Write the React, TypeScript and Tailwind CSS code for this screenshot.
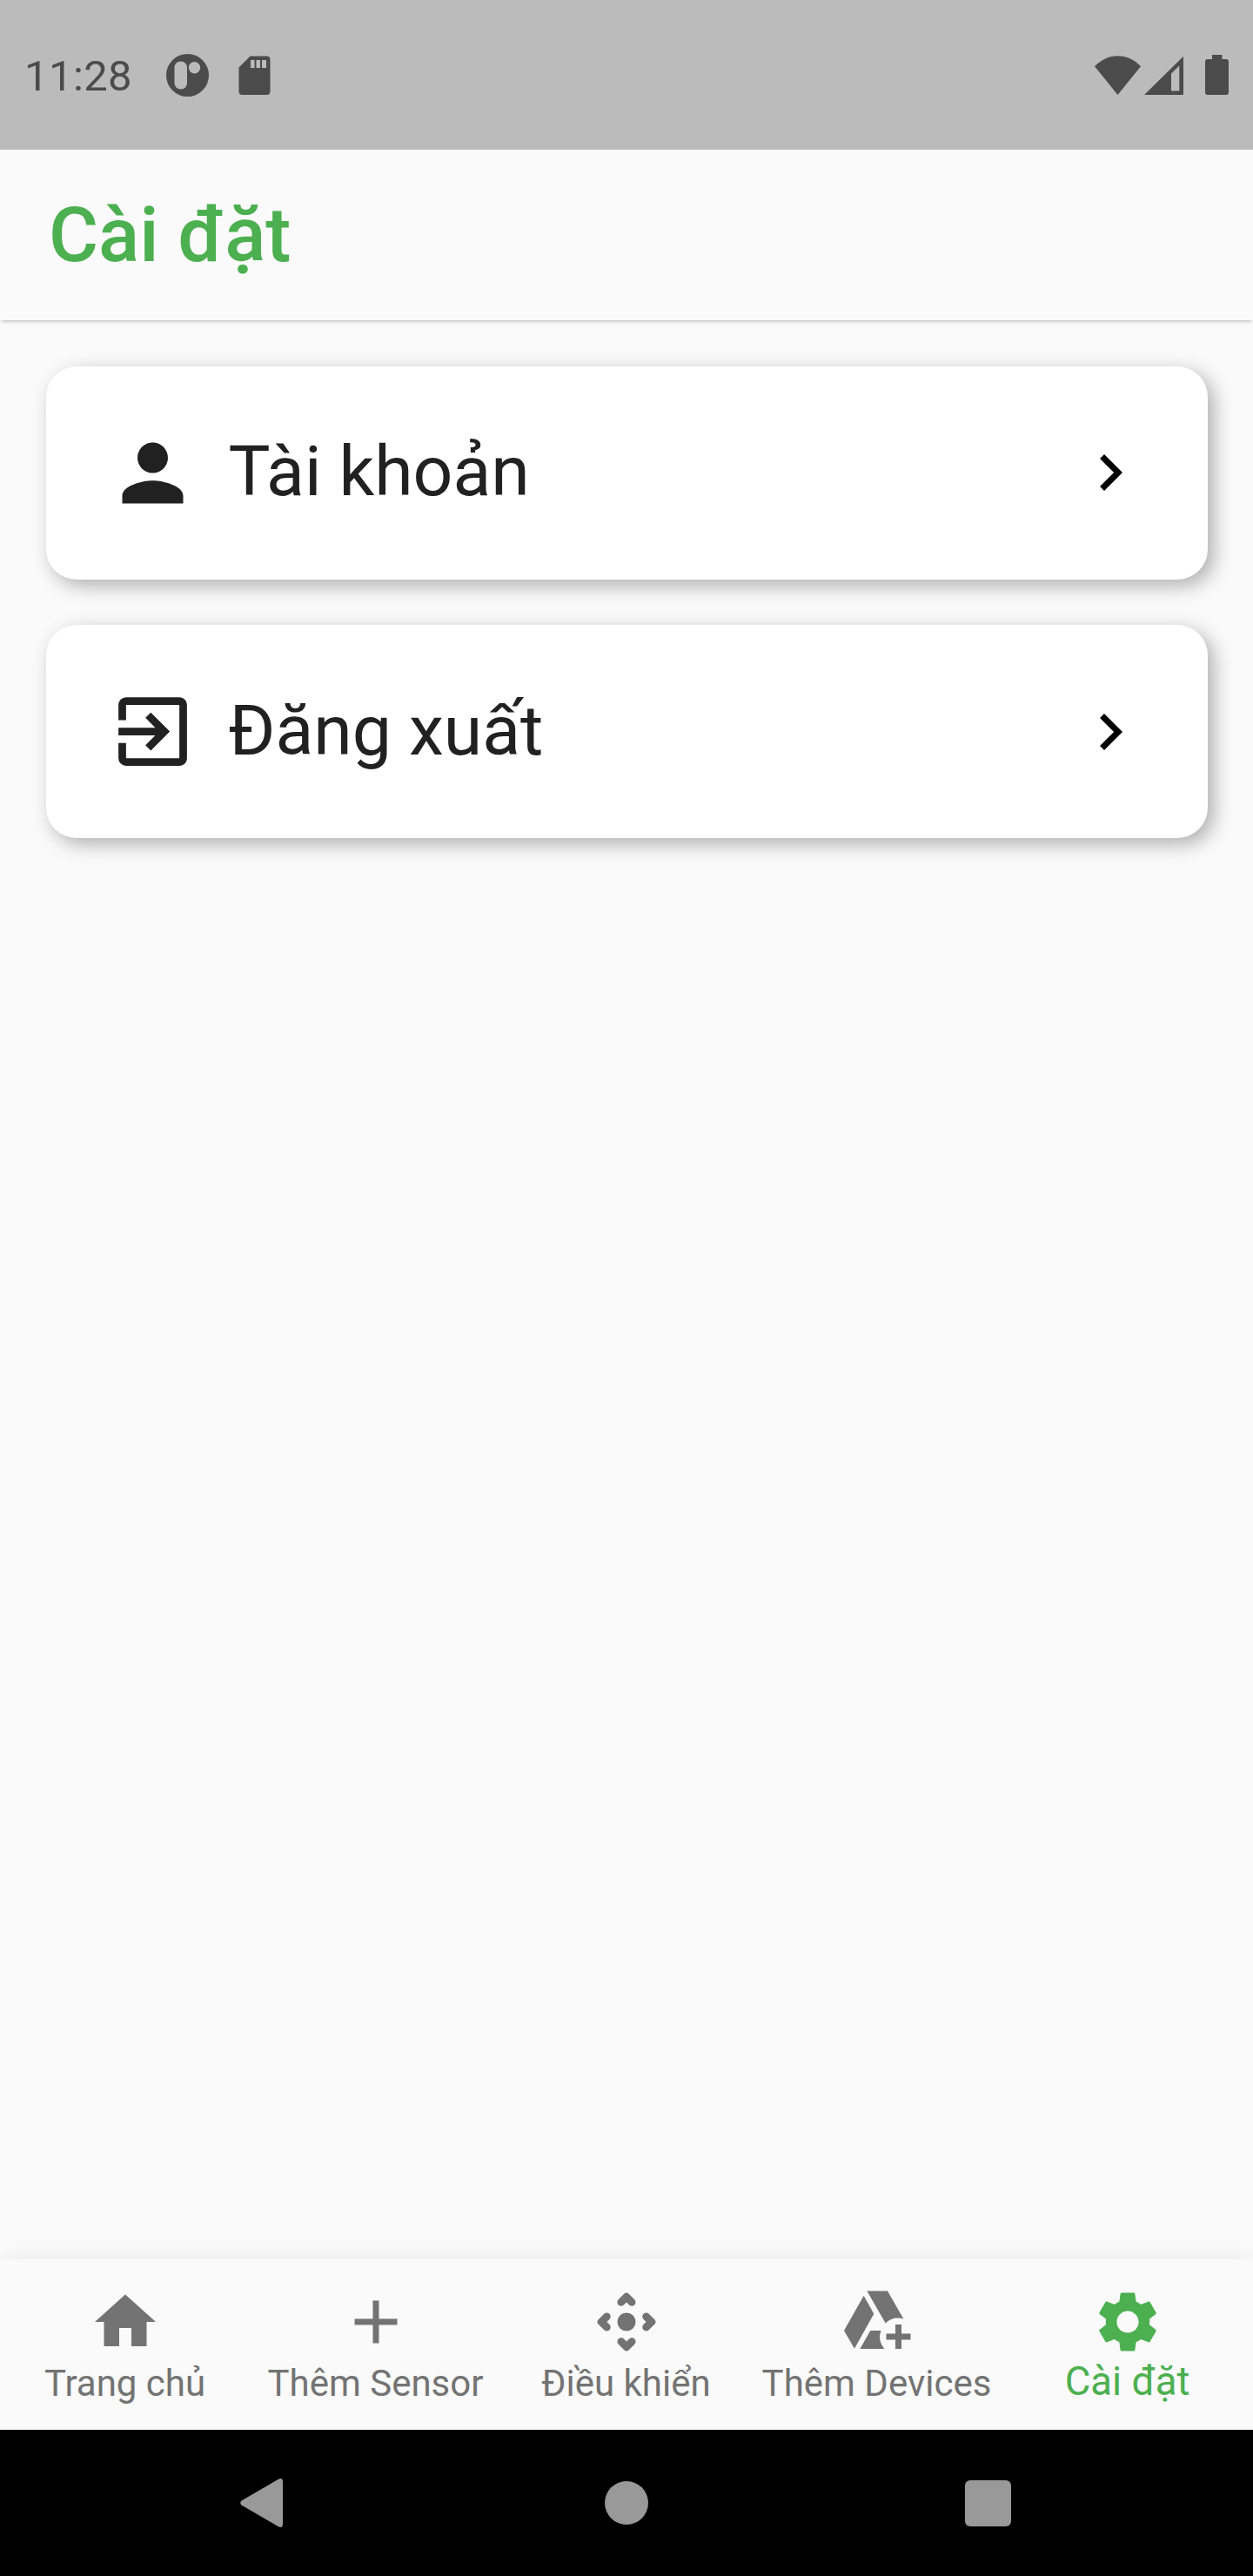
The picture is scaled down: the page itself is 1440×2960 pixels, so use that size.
import type { ComponentType, ReactNode } from "react";
import { MdAdd, MdChevronRight, MdExitToApp, MdHome, MdPerson, MdSettings } from "react-icons/md";

type IconType = ComponentType<{ className?: string }>;

function ControlCameraRounded({ className }: { className?: string }) {
  return (
    <svg viewBox="0 0 24 24" fill="currentColor" className={className}>
      <path d="M4.65 9.35l-1.94 1.94c-.39.39-.39 1.02 0 1.41l1.94 1.94c.49.49 1.28.49 1.77 0 .48-.49.48-1.27 0-1.76l-.88-.88.88-.88c.48-.49.48-1.27 0-1.76-.49-.49-1.28-.5-1.77-.01z" />
      <path d="M17.58 9.35c-.48.49-.48 1.27 0 1.76l.88.88-.88.88c-.48.49-.48 1.27 0 1.76.49.49 1.28.49 1.77 0l1.94-1.94c.39-.39.39-1.02 0-1.41l-1.94-1.94c-.49-.48-1.28-.48-1.77.01z" />
      <path d="M12 18.46l-.88-.88c-.49-.48-1.27-.48-1.76 0-.49.49-.49 1.28 0 1.77l1.94 1.94c.39.39 1.02.39 1.41 0l1.94-1.94c.49-.49.49-1.28 0-1.77-.49-.48-1.27-.48-1.76 0l-.89.88z" />
      <path d="M9.35 6.42c.49.48 1.27.48 1.76 0l.88-.88.88.88c.49.48 1.27.48 1.76 0 .49-.49.49-1.28 0-1.77L12.7 2.71c-.39-.39-1.02-.39-1.41 0L9.35 4.65c-.49.49-.49 1.28 0 1.77z" />
      <circle cx="12" cy="12" r="3" />
    </svg>
  );
}

function AddToDriveFilled({ className }: { className?: string }) {
  return (
    <svg viewBox="0 0 24 24" fill="currentColor" className={className}>
      <path d="M7.62 3.4L10.95 9.35L4.57 20.75L1.14 14.85Z" />
      <path d="M8.67 1.86H15.43L20.67 11.02A6.2 6.2 0 0 0 14.76 12.45Z" />
      <path d="M9.8 14.86H13.24A6.2 6.2 0 0 0 14.38 20.86H6.38Z" />
      <path d="M20 12.86V15.86H23V17.86H20V20.86H18V17.86H15V15.86H18V12.86Z" />
    </svg>
  );
}

function StatusBar() {
  return (
    <header className="flex h-[172px] items-center bg-[#bbbbbb] pl-[28px] pr-[28px] text-[#4b4b4b]">
      <span className="mt-[4px] w-[163px] text-[49px] leading-[58px] tracking-[0.4px]">11:28</span>
      <svg viewBox="0 0 49 49" className="h-[49px] w-[49px]">
        <circle cx="24.5" cy="24.5" r="24.5" fill="currentColor" />
        <rect x="9.5" y="8.5" width="14.5" height="32" rx="7" fill="#bbbbbb" />
        <circle cx="32.5" cy="15.7" r="6.7" fill="#bbbbbb" />
      </svg>
      <svg viewBox="0 0 37 45" className="ml-[34px] h-[45px] w-[37px]">
        <path
          fill="currentColor"
          fillRule="evenodd"
          d="M13.5 .5H32.5a4 4 0 0 1 4 4V41a4 4 0 0 1-4 4H4.5a4 4 0 0 1-4-4V13.5ZM14 5v9h4.5V5ZM20.5 5v9H25V5ZM27 5v9h5V5Z"
        />
      </svg>
      <div className="ml-auto flex items-center">
        <svg viewBox="0 0 53 45" className="h-[45px] w-[53px]">
          <path fill="currentColor" d="M0 12.3C7.5 4.5 16.5 .3 26.5 .3S45.5 4.5 53 12.3L26.5 45Z" />
        </svg>
        <svg viewBox="0 0 45 45" className="ml-[4px] h-[45px] w-[45px]">
          <path fill="currentColor" fillRule="evenodd" d="M0 45L45 .8V45ZM31 20.5V40.5H40.3V11.5Z" />
        </svg>
        <svg viewBox="0 0 27 46" className="ml-[25px] h-[46px] w-[27px]">
          <path
            fill="currentColor"
            d="M8 0H19.5V5H24a3 3 0 0 1 3 3V43a3 3 0 0 1-3 3H3a3 3 0 0 1-3-3V8A3 3 0 0 1 3 5H8Z"
          />
        </svg>
      </div>
    </header>
  );
}

function SettingsCard({ icon: Icon, children }: { icon: IconType; children: ReactNode }) {
  return (
    <button className="flex h-[245px] w-full items-center rounded-[35px] bg-white px-[70px] text-left shadow-[7px_7px_22px_rgba(0,0,0,0.3)]">
      <Icon className="size-[105px] text-[#212121]" />
      <span className="mb-[2px] ml-[35px] flex-1 text-[80.5px] leading-[94px] text-[#212121]">{children}</span>
      <MdChevronRight className="size-[84px] text-black" />
    </button>
  );
}

const tabs: { label: string; icon: IconType; active?: boolean }[] = [
  { label: "Trang chủ", icon: MdHome },
  { label: "Thêm Sensor", icon: MdAdd },
  { label: "Điều khiển", icon: ControlCameraRounded },
  { label: "Thêm Devices", icon: AddToDriveFilled },
  { label: "Cài đặt", icon: MdSettings, active: true },
];

function BottomTabs() {
  return (
    <nav className="grid h-[196px] grid-cols-5 bg-[#fafafa] shadow-[0_-3px_22px_rgba(0,0,0,0.06)]">
      {tabs.map(({ label, icon: Icon, active }) => (
        <button
          key={label}
          className={
            active
              ? "flex flex-col items-center pt-[30px] text-[#4caf50]"
              : "flex flex-col items-center pt-[30px] text-[#737373]"
          }
        >
          <Icon className="size-[84px]" />
          <span
            className={
              active
                ? "mr-[1px] mt-[1px] whitespace-nowrap text-[45.5px] leading-[52px]"
                : "mr-[1px] mt-[3px] whitespace-nowrap text-[42px] leading-[52px]"
            }
          >
            {label}
          </span>
        </button>
      ))}
    </nav>
  );
}

function SystemNavigation() {
  return (
    <footer className="flex h-[168px] items-center bg-black pl-[276px] text-[#999999]">
      <svg viewBox="0 0 49 56" className="h-[56px] w-[49px]">
        <path
          fill="currentColor"
          d="M1.5 25.5Q-1 28 1.5 30.5L44 55.2Q49 57.5 49 52V4Q49 -1.5 44 .8Z"
        />
      </svg>
      <span className="ml-[370px] size-[50px] rounded-full bg-[#999999]" />
      <span className="ml-[364px] size-[53px] rounded-[6px] bg-[#999999]" />
    </footer>
  );
}

export default function App() {
  return (
    <div className="flex h-[2960px] w-[1440px] flex-col overflow-hidden bg-[#fafafa] font-[Roboto,sans-serif]">
      <StatusBar />
      <div className="flex h-[196px] items-center bg-[#fafafa] pl-[56px] shadow-[0_3px_4px_-2px_rgba(0,0,0,0.3)]">
        <h1 className="text-[87.5px] font-medium leading-[104px] text-[#4caf50]">Cài đặt</h1>
      </div>
      <main className="flex flex-1 flex-col gap-[52.5px] px-[52.5px] pt-[52.5px]">
        <SettingsCard icon={MdPerson}>Tài khoản</SettingsCard>
        <SettingsCard icon={MdExitToApp}>Đăng xuất</SettingsCard>
      </main>
      <BottomTabs />
      <SystemNavigation />
    </div>
  );
}
